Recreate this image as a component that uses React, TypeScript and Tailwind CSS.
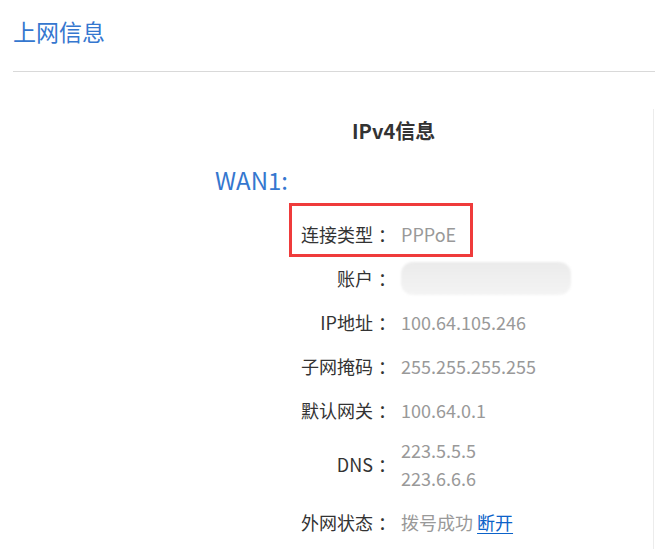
import React from "react";

const font = { fontFamily: '"Noto Sans CJK SC", "Noto Sans", sans-serif' };

function Row({
  label,
  children,
  h = "h-[44px]",
}: {
  label: string;
  children: React.ReactNode;
  h?: string;
}) {
  return (
    <div className={`flex items-center ${h}`}>
      <div className="w-[360px] text-right text-[18px] text-[#333]">{label}</div>
      <div className="w-[28px] pl-[5px] text-left text-[18px] text-[#333]">：</div>
      <div className="text-[18px] text-[#999]">{children}</div>
    </div>
  );
}

export default function App() {
  return (
    <div className="relative w-[655px] h-[556px] overflow-hidden bg-white pl-[13px]" style={font}>
      <div className="pt-[16px] h-[72px] border-b border-[#d9d9d9]">
        <div className="text-[23px] leading-[30px] text-[#3577cf]">上网信息</div>
      </div>
      <div className="mt-[37px] h-[440px] border-r border-[#ececec] mr-[1px]">
        <div className="pl-[339px] pt-[8px] text-[20px] leading-[28px] font-bold text-[#333]">
          IPv4信息
        </div>
        <div className="mt-[20px] pl-[202px] text-[24px] leading-[30px] text-[#3577cf]">
          WAN1:
        </div>
        <div className="mt-[17px]">
          <div className="relative">
            <div className="pointer-events-none absolute left-[276px] top-[-9px] w-[184px] h-[54px] border-[3px] border-[#ef3b3b]" />
            <Row label="连接类型">PPPoE</Row>
          </div>
          <Row label="账户">
            <div className="w-[170px] h-[33px] rounded-[12px] bg-gradient-to-b from-[#ebebeb] to-[#f4f4f4] blur-[1px]" />
          </Row>
          <Row label="IP地址">100.64.105.246</Row>
          <Row label="子网掩码">255.255.255.255</Row>
          <Row label="默认网关">100.64.0.1</Row>
          <Row label="DNS" h="h-[64px]">
            <div className="leading-[28px]">223.5.5.5</div>
            <div className="leading-[28px]">223.6.6.6</div>
          </Row>
          <Row label="外网状态" h="h-[52px]">
            <span>拨号成功</span>{" "}
            <a className="text-[#0b62c9] underline underline-offset-[3px] cursor-pointer">断开</a>
          </Row>
        </div>
      </div>
    </div>
  );
}
